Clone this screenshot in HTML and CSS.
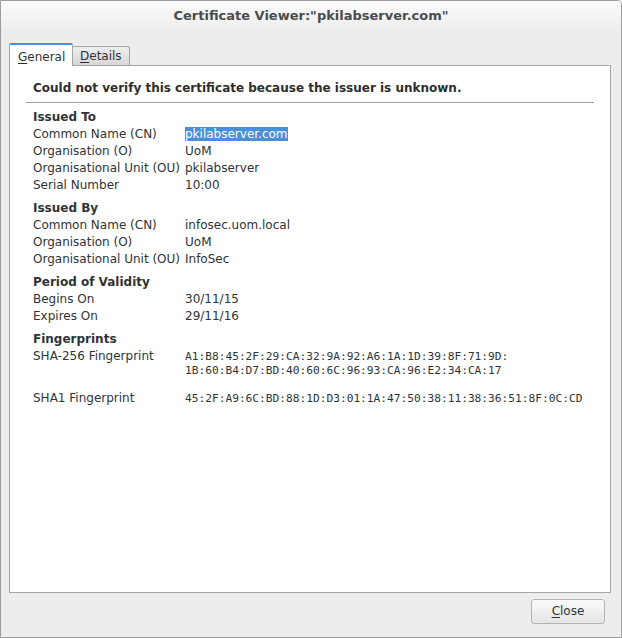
FILE: index.html
```html
<!DOCTYPE html>
<html>
<head>
<meta charset="utf-8">
<link rel="stylesheet" href="styles.css">
</head>
<body>
<div class="window">
  <div class="titlebar">Certificate Viewer:"pkilabserver.com"</div>
  <div class="tabs">
    <div class="tab active"><u>G</u>eneral</div>
    <div class="tab"><u>D</u>etails</div>
  </div>
  <div class="panel">
    <div class="warning">Could not verify this certificate because the issuer is unknown.</div>
    <div class="sep"></div>
    <div class="section">
      <div class="head">Issued To</div>
      <div class="row"><span class="lbl">Common Name (CN)</span><span class="val"><span class="sel">pkilabserver.com</span></span></div>
      <div class="row"><span class="lbl">Organisation (O)</span><span class="val">UoM</span></div>
      <div class="row"><span class="lbl">Organisational Unit (OU)</span><span class="val">pkilabserver</span></div>
      <div class="row"><span class="lbl">Serial Number</span><span class="val">10:00</span></div>
    </div>
    <div class="section">
      <div class="head">Issued By</div>
      <div class="row"><span class="lbl">Common Name (CN)</span><span class="val">infosec.uom.local</span></div>
      <div class="row"><span class="lbl">Organisation (O)</span><span class="val">UoM</span></div>
      <div class="row"><span class="lbl">Organisational Unit (OU)</span><span class="val">InfoSec</span></div>
    </div>
    <div class="section">
      <div class="head">Period of Validity</div>
      <div class="row"><span class="lbl">Begins On</span><span class="val">30/11/15</span></div>
      <div class="row"><span class="lbl">Expires On</span><span class="val">29/11/16</span></div>
    </div>
    <div class="section">
      <div class="head">Fingerprints</div>
      <div class="row fp"><span class="lbl">SHA-256 Fingerprint</span><span class="val mono">A1:B8:45:2F:29:CA:32:9A:92:A6:1A:1D:39:8F:71:9D:<br>1B:60:B4:D7:BD:40:60:6C:96:93:CA:96:E2:34:CA:17</span></div>
      <div class="row fp"><span class="lbl">SHA1 Fingerprint</span><span class="val mono">45:2F:A9:6C:BD:88:1D:D3:01:1A:47:50:38:11:38:36:51:8F:0C:CD</span></div>
    </div>
  </div>
  <div class="footer">
    <div class="button"><u>C</u>lose</div>
  </div>
</div>
</body>
</html>
```
FILE: styles.css
```css
html, body {
  margin: 0;
  padding: 0;
  background: #ededed;
}
body {
  font-family: "DejaVu Sans", "Liberation Sans", sans-serif;
  font-size: 12px;
  color: #2e3436;
}
.window {
  width: 622px;
  height: 638px;
  box-sizing: border-box;
  border: 1px solid #9d9d9d;
  border-top-right-radius: 5px;
  background: #ededed;
  display: flex;
  flex-direction: column;
  overflow: hidden;
}
.titlebar {
  height: 30px;
  line-height: 30px;
  text-align: center;
  font-weight: bold;
  font-size: 13px;
  color: #4a4d4f;
  background: linear-gradient(#fbfbfb, #ededed);
  flex: none;
}
.tabs {
  height: 34px;
  flex: none;
  display: flex;
  align-items: flex-end;
  padding-left: 8px;
}
.tab {
  box-sizing: border-box;
  height: 19px;
  padding: 0 7px;
  line-height: 19px;
  border: 1px solid #a6a6a6;
  border-bottom: none;
  border-left: none;
  border-radius: 2px 2px 0 0;
  background: linear-gradient(#eeeeee, #d6d6d6);
  color: #2e3436;
  width: 57px;
}
.tab.active {
  height: 23px;
  line-height: 24px;
  width: 64px;
  background: #ffffff;
  border: 1px solid #a6a6a6;
  border-top: 2px solid #4a90d9;
  border-bottom: none;
  padding: 0 8px;
  margin-bottom: -1px;
  position: relative;
  z-index: 1;
}
.tab u, .button u {
  text-decoration: underline;
  text-underline-offset: 2px;
}
.panel {
  flex: none;
  height: 528px;
  box-sizing: border-box;
  margin: 0 10px 0 8px;
  border: 1px solid #a6a6a6;
  background: #ffffff;
  padding: 14px 0 0 0;
}
.warning {
  font-weight: bold;
  font-size: 12px;
  line-height: 17px;
  padding-left: 23px;
  color: #2e2e2e;
}
.sep {
  height: 1px;
  background: #a0a0a0;
  margin: 5px 16px 5px 16px;
}
.section {
  padding-left: 23px;
  margin-bottom: 5px;
}
.head {
  font-weight: bold;
  font-size: 12px;
  line-height: 18px;
}
.row {
  display: grid;
  grid-template-columns: 152px 1fr;
  line-height: 17px;
}
.row.fp {
  margin-bottom: 12px;
}
.sel {
  background: #4a90d9;
  color: #ffffff;
}
.mono {
  font-family: "DejaVu Sans Mono", "Liberation Mono", monospace;
  font-size: 11.2px;
  line-height: 14px;
  padding-top: 2px;
}
.footer {
  flex: 1;
  display: flex;
  justify-content: flex-end;
  align-items: flex-start;
  padding: 6px 16px 0 0;
}
.button {
  box-sizing: border-box;
  width: 74px;
  height: 25px;
  line-height: 23px;
  text-align: center;
  border: 1px solid #b3b3b3;
  border-radius: 3px;
  background: linear-gradient(#fafafa, #e4e4e4);
  color: #2e3436;
}
```
